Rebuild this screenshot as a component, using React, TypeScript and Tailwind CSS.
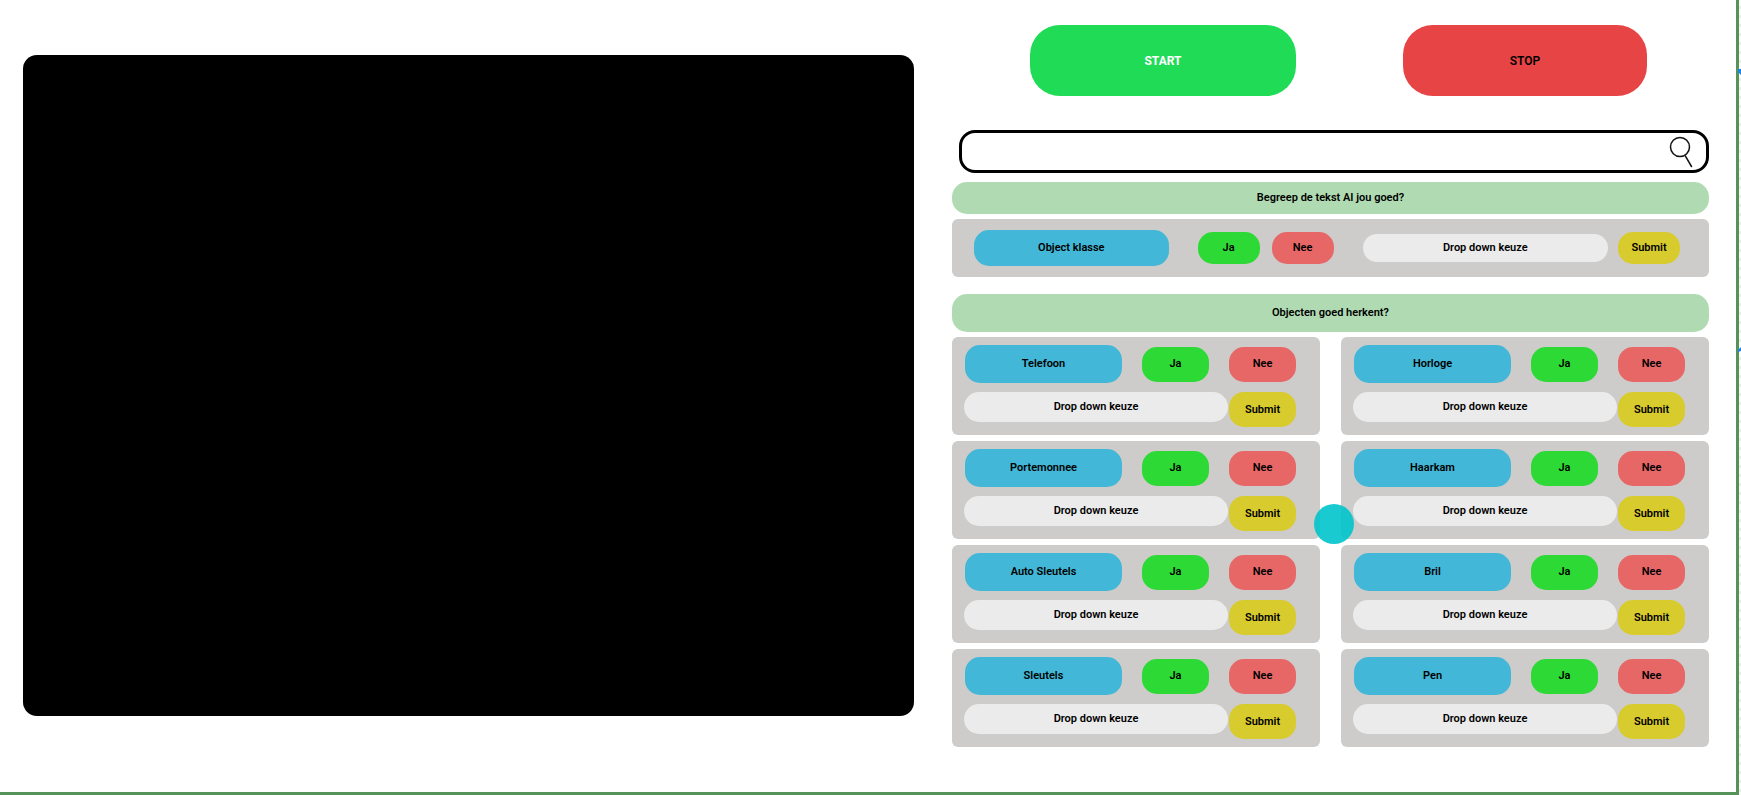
import React from "react";

const objects = [
  "Telefoon",
  "Horloge",
  "Portemonnee",
  "Haarkam",
  "Auto Sleutels",
  "Bril",
  "Sleutels",
  "Pen",
];

function Choice({ tone, className, children }: { tone: string; className: string; children: string }) {
  return (
    <button type="button" className={`${tone} ${className} shrink-0 rounded-[15px] text-center`}>
      {children}
    </button>
  );
}

function DropDown({ name, className }: { name: string; className: string }) {
  return (
    <select
      aria-label={name}
      className={`${className} min-w-0 appearance-none rounded-[15px] bg-[#ebebeb] text-center [text-align-last:center]`}
    >
      <option>Drop down keuze</option>
    </select>
  );
}

function ObjectCard({ name }: { name: string }) {
  return (
    <article className="flex flex-col gap-[9px] rounded-md bg-[#cdccca] py-2 pr-6 pl-3">
      <div className="flex items-center pl-px">
        <h3 className="mr-5 flex h-[38px] flex-1 items-center justify-center rounded-[15px] bg-[#42b7d7]">
          {name}
        </h3>
        <Choice tone="bg-[#2dda35]" className="mr-5 h-[35px] w-[67px]">Ja</Choice>
        <Choice tone="bg-[#e76767]" className="h-[35px] w-[67px]">Nee</Choice>
      </div>
      <div className="flex items-start gap-px">
        <DropDown name={name} className="h-[30px] flex-1" />
        <Choice tone="bg-[#d8cb2d]" className="h-[35px] w-[67px]">Submit</Choice>
      </div>
    </article>
  );
}

export default function App() {
  return (
    <div className="relative flex min-h-screen overflow-hidden bg-white font-['Roboto','Liberation_Sans',sans-serif] text-[11px] leading-4 font-semibold text-black">
      <main className="grid flex-1 grid-cols-[891fr_757fr] items-start gap-[38px] border-r-3 border-b-3 border-[#56935a] pr-[27px] pl-[23px]">
        <section aria-label="Camera" className="mt-[55px] aspect-[891/661] rounded-[14px] bg-black" />

        <section className="flex flex-col pt-[25px] pb-[45px]">
          <div className="grid grid-cols-[266fr_244fr] gap-[107px] pr-[62px] pl-[78px] text-[12px]">
            <button type="button" className="h-[71px] rounded-[30px] bg-[#1fdb56] font-bold text-white">START</button>
            <button type="button" className="h-[71px] rounded-[30px] bg-[#e74445]">STOP</button>
          </div>

          <form className="mt-[34px] ml-[7px] flex h-[43px] items-center rounded-[16px] border-3 border-black pr-[11px]">
            <input type="text" aria-label="Zoeken" className="h-full min-w-0 flex-1 bg-transparent pl-4 outline-none" />
            <button type="button" aria-label="Zoek" className="shrink-0">
              <svg width="26" height="32" viewBox="0 0 26 32" fill="none" stroke="#111" strokeWidth="1.5">
                <circle cx="11" cy="11" r="9.5" />
                <path d="M16 19.4 22.8 31" />
              </svg>
            </button>
          </form>

          <h2 className="mt-[9px] flex h-8 items-center justify-center rounded-[15px] bg-[#b0dbb2]">
            Begreep de tekst AI jou goed?
          </h2>
          <div className="mt-[5px] flex h-[58px] items-center rounded-md bg-[#cdccca] pr-[29px] pl-[22px]">
            <h3 className="mr-[29px] flex h-9 flex-[195] items-center justify-center rounded-[15px] bg-[#42b7d7]">
              Object klasse
            </h3>
            <Choice tone="bg-[#2dda35]" className="mr-3 h-8 w-[62px]">Ja</Choice>
            <Choice tone="bg-[#e76767]" className="mr-[29px] h-8 w-[62px]">Nee</Choice>
            <DropDown name="Object klasse" className="mr-[10px] h-7 flex-[246]" />
            <Choice tone="bg-[#d8cb2d]" className="h-8 w-[62px]">Submit</Choice>
          </div>

          <h2 className="mt-[17px] flex h-[38px] items-center justify-center rounded-[15px] bg-[#b0dbb2]">
            Objecten goed herkent?
          </h2>
          <div className="relative mt-[5px] grid grid-cols-2 gap-x-[21px] gap-y-[6px]">
            {objects.map((name) => (
              <ObjectCard key={name} name={name} />
            ))}
            <span className="absolute top-[167px] left-[362px] size-10 rounded-full bg-[#00c4cc]/90" />
          </div>
        </section>
      </main>

      <aside className="w-[2px] bg-[repeating-linear-gradient(#fcfcfc_0px,#fcfcfc_6px,#ececec_6px,#ececec_9px)]" />
      <svg className="absolute top-[67px] right-0" width="3" height="8" viewBox="0 0 3 8" fill="#1a83ea">
        <path d="M0 3 1 2 3 2V8L0 5Z" />
      </svg>
      <svg className="absolute top-[346px] right-0" width="3" height="8" viewBox="0 0 3 8" fill="#1a83ea">
        <path d="M0 4 3 1V5L0 6Z" />
      </svg>
    </div>
  );
}
